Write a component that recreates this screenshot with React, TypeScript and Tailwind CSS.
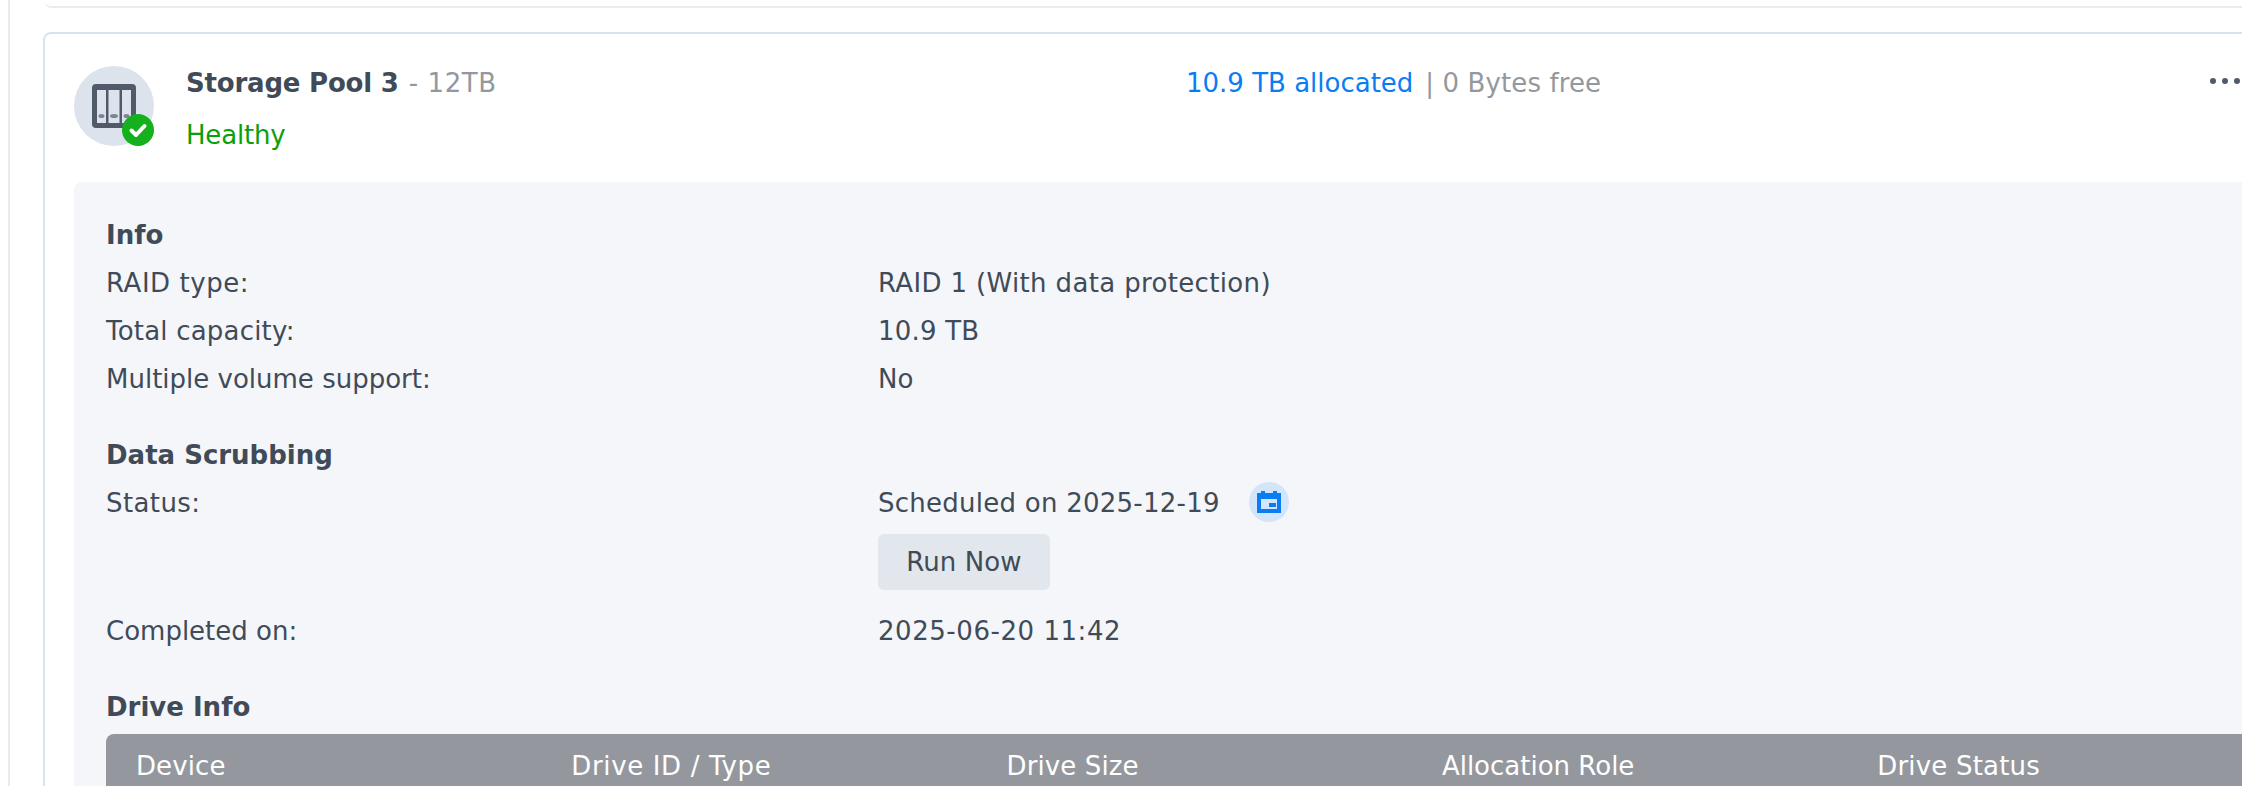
const font = { fontFamily: '"DejaVu Sans", Verdana, sans-serif' };

function PoolIcon() {
  return (
    <div className="relative h-[80px] w-[80px] shrink-0 rounded-full bg-[#dce3ec]">
      <svg className="absolute left-[18px] top-[18px]" width="44" height="44" viewBox="0 0 44 44">
        <rect x="0" y="0" width="44" height="44" rx="4" fill="#515a68" />
        <rect x="5" y="6" width="9" height="33" fill="#dce3ec" />
        <rect x="16.5" y="6" width="11" height="33" fill="#dce3ec" />
        <rect x="30" y="6" width="9" height="33" fill="#dce3ec" />
        <ellipse cx="9.5" cy="32" rx="3" ry="2" fill="#7d8592" />
        <ellipse cx="22" cy="32" rx="4" ry="2" fill="#7d8592" />
        <ellipse cx="34.5" cy="32" rx="3" ry="2" fill="#7d8592" />
      </svg>
      <svg className="absolute left-[48px] top-[48px]" width="32" height="32" viewBox="0 0 32 32">
        <circle cx="16" cy="16" r="16" fill="#14b01e" />
        <path d="M9.5 16.5 L14 21 L22.5 12" fill="none" stroke="#fff" strokeWidth="4" strokeLinecap="round" strokeLinejoin="round" />
      </svg>
    </div>
  );
}

function Row({ label, value, labelClass = '', valueClass = '' }: { label: string; value: string; labelClass?: string; valueClass?: string }) {
  return (
    <div className="flex h-[48px] items-center pt-[2px]">
      <div className={`w-[772px] ${labelClass}`}>{label}</div>
      <div className={valueClass}>{value}</div>
    </div>
  );
}

function Heading({ children }: { children: string }) {
  return <div className="flex h-[48px] items-center pt-[2px] font-bold">{children}</div>;
}

export default function App() {
  const cols = [
    { t: 'Device', c: 'tracking-[0.1px]' },
    { t: 'Drive ID / Type', c: 'tracking-[0.65px]' },
    { t: 'Drive Size', c: 'tracking-[0.1px]' },
    { t: 'Allocation Role', c: '' },
    { t: 'Drive Status', c: 'tracking-[0.2px]' },
  ];
  return (
    <div style={font} className="h-[786px] w-[2242px] overflow-hidden bg-white text-[26px] text-[#414b58]">
      <div className="ml-[8px] h-[786px] w-[2400px] border-l-2 border-[#e6ebf1]">
        <div className="ml-[35px] h-[8px] rounded-b-[6px] border-b-2 border-[#e9edf2]" />
        <div className="ml-[33px] mt-[24px] rounded-[8px] border-2 border-[#dae3ec] bg-white px-[29px] pt-[32px]">
          <div className="flex h-[116px] items-start">
            <PoolIcon />
            <div className="ml-[32px] w-[1000px]">
              <div className="flex h-[34px] items-center">
                <span className="font-bold tracking-[-0.2px]">Storage Pool 3</span>
                <span className="ml-[10px] tracking-[0.6px] text-[#94989e]">- 12TB</span>
              </div>
              <div className="mt-[18px] flex h-[34px] items-center tracking-[-0.2px] text-[#0aa00a]">Healthy</div>
            </div>
            <div className="flex h-[34px] w-[1024px] items-center">
              <span className="text-[#0a7df2]">10.9 TB allocated</span>
              <span className="ml-[12px] tracking-[0.1px] text-[#94989e]">| 0 Bytes free</span>
            </div>
            <div className="flex h-[32px] items-center gap-[6px] pb-[2px]">
              <span className="h-[6px] w-[6px] rounded-full bg-[#515a68]" />
              <span className="h-[6px] w-[6px] rounded-full bg-[#515a68]" />
              <span className="h-[6px] w-[6px] rounded-full bg-[#515a68]" />
            </div>
          </div>
          <div className="rounded-[8px] bg-[#f4f6fa] px-[32px] pt-[28px]">
            <Heading>Info</Heading>
            <Row label="RAID type:" labelClass="tracking-[0.55px]" value="RAID 1 (With data protection)" valueClass="tracking-[0.35px]" />
            <Row label="Total capacity:" labelClass="tracking-[0.2px]" value="10.9 TB" valueClass="tracking-[0.2px]" />
            <Row label="Multiple volume support:" value="No" />
            <div className="mt-[28px]">
              <Heading>Data Scrubbing</Heading>
            </div>
            <div className="flex h-[48px] items-center">
              <div className="w-[772px] pt-[2px] tracking-[0.4px]">Status:</div>
              <div className="pt-[2px] tracking-[0.25px]">Scheduled on 2025-12-19</div>
              <div className="ml-[29px] flex h-[40px] w-[40px] items-center justify-center rounded-full bg-[#d2e5fb]">
                <svg width="24" height="22" viewBox="0 0 24 22">
                  <path d="M4 0h4v2h8V0h4v2h4v20H0V2h4z" fill="#0a7df2" />
                  <rect x="4" y="8" width="16" height="10" fill="#d2e5fb" />
                  <rect x="12" y="12" width="7" height="4" fill="#0a7df2" />
                </svg>
              </div>
            </div>
            <div className="ml-[772px] mt-[8px] flex h-[56px] w-[172px] items-center justify-center rounded-[6px] bg-[#e1e7ed] pt-[1px] tracking-[0.1px]">
              Run Now
            </div>
            <div className="mt-[16px]">
              <Row label="Completed on:" value="2025-06-20 11:42" valueClass="tracking-[0.55px]" />
            </div>
            <div className="mt-[28px]">
              <Heading>Drive Info</Heading>
            </div>
            <div className="mt-[4px] flex h-[80px] rounded-t-[8px] bg-[#94989e] pl-[30px] pt-[13px] text-white">
              {cols.map((c) => (
                <div key={c.t} className={`w-[435.3px] ${c.c}`}>
                  {c.t}
                </div>
              ))}
            </div>
          </div>
        </div>
      </div>
    </div>
  );
}
